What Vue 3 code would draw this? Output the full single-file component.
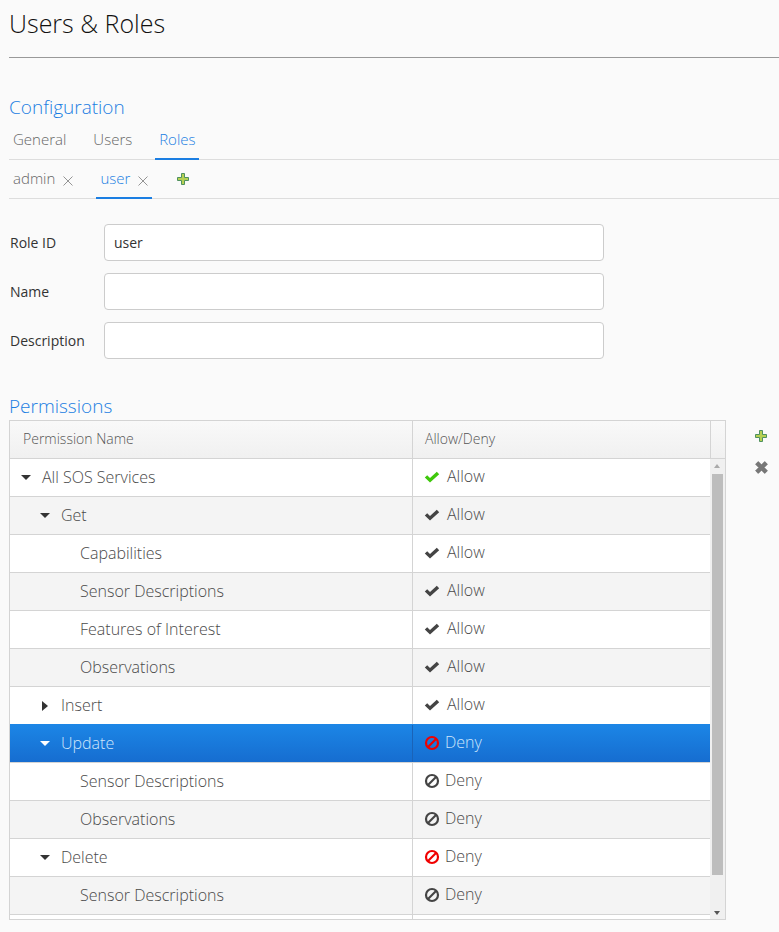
<script setup>
const rows = [
  { name: "All SOS Services", level: 1, arrow: "down", value: "Allow", color: "green" },
  { name: "Get", level: 2, arrow: "down", value: "Allow" },
  { name: "Capabilities", level: 3, value: "Allow" },
  { name: "Sensor Descriptions", level: 3, value: "Allow" },
  { name: "Features of Interest", level: 3, value: "Allow" },
  { name: "Observations", level: 3, value: "Allow" },
  { name: "Insert", level: 2, arrow: "right", value: "Allow" },
  { name: "Update", level: 2, arrow: "down", value: "Deny", color: "red", selected: true },
  { name: "Sensor Descriptions", level: 3, value: "Deny" },
  { name: "Observations", level: 3, value: "Deny" },
  { name: "Delete", level: 2, arrow: "down", value: "Deny", color: "red" },
  { name: "Sensor Descriptions", level: 3, value: "Deny" },
  { name: "", level: 3, value: "" },
];
</script>

<template>
  <div class="page">
    <h1 class="title">Users &amp; Roles</h1>
    <hr class="rule" />

    <h2 class="section config">Configuration</h2>
    <div class="tabs">
      <a class="tab">General</a>
      <a class="tab">Users</a>
      <a class="tab active">Roles</a>
    </div>
    <div class="subtabs">
      <a class="subtab">
        admin
        <svg class="close" viewBox="0 0 10 10"><path d="M.5 .5l9 9M9.5 .5l-9 9" /></svg>
      </a>
      <a class="subtab active">
        user
        <svg class="close" viewBox="0 0 10 10"><path d="M.5 .5l9 9M9.5 .5l-9 9" /></svg>
      </a>
      <svg class="add sub-add" viewBox="0 0 12 12">
        <path d="M4.5 .5h3v4h4v3h-4v4h-3v-4h-4v-3h4z" fill="#b6d052" stroke="#4f9160" />
      </svg>
    </div>

    <div class="form">
      <label class="field">
        <span class="field-label">Role ID</span>
        <input class="input" type="text" value="user" />
      </label>
      <label class="field">
        <span class="field-label">Name</span>
        <input class="input" type="text" />
      </label>
      <label class="field">
        <span class="field-label">Description</span>
        <input class="input" type="text" />
      </label>
    </div>

    <h2 class="section perms">Permissions</h2>
    <div class="table-wrap">
      <div class="table">
        <div class="head">
          <div class="col-name head-cell">Permission Name</div>
          <div class="col-value head-cell">Allow/Deny</div>
          <div class="head-spacer"></div>
        </div>
        <div class="body">
          <div class="rows">
            <div
              v-for="(row, i) in rows"
              :key="i"
              class="row"
              :class="{ odd: i % 2 === 1, selected: row.selected }"
            >
              <div class="col-name cell" :class="'level' + row.level">
                <span v-if="row.arrow" class="arrow" :class="row.arrow"></span>
                {{ row.name }}
              </div>
              <div class="col-value cell">
                <template v-if="row.value === 'Allow'">
                  <svg class="state" :class="row.color" viewBox="0 0 16 16">
                    <path d="M.8 8.6 3.2 6.2 6 9 12.8 2.8 15.2 5.2 6 13.6z" fill="currentColor" />
                  </svg>
                  <span class="value-text allow">{{ row.value }}</span>
                </template>
                <template v-else-if="row.value === 'Deny'">
                  <svg class="state" :class="row.color" viewBox="0 0 16 16">
                    <circle cx="8" cy="8" r="6" fill="none" stroke="currentColor" stroke-width="2.2" />
                    <path d="M4 12 12 4" stroke="currentColor" stroke-width="2.2" />
                  </svg>
                  <span class="value-text">{{ row.value }}</span>
                </template>
              </div>
            </div>
          </div>
          <div class="scrollbar">
            <span class="sb-up"></span>
            <div class="thumb"></div>
            <span class="sb-down"></span>
          </div>
        </div>
      </div>
      <div class="side-actions">
        <svg class="add" viewBox="0 0 12 12">
          <path d="M4.5 .5h3v4h4v3h-4v4h-3v-4h-4v-3h4z" fill="#b6d052" stroke="#4f9160" />
        </svg>
        <svg class="remove" viewBox="0 0 12 12">
          <path d="M3 .5 6 3.5 9 .5 11.5 3 8.5 6 11.5 9 9 11.5 6 8.5 3 11.5 .5 9 3.5 6 .5 3z" fill="#777" stroke="#666" stroke-width=".6" />
        </svg>
      </div>
    </div>
  </div>
</template>

<style>
html,
body {
  background: #fafafa;
}
</style>

<style scoped>
.page {
  height: 932px;
  overflow: hidden;
  box-sizing: border-box;
  padding-left: 9px;
  background: #fafafa;
  font-family: "Open Sans", sans-serif;
  font-weight: 300;
  color: #333;
}

.title {
  margin: 0;
  padding-top: 6px;
  height: 50px;
  box-sizing: border-box;
  font-size: 25px;
  line-height: 34px;
  font-weight: 300;
  color: #111;
}

.rule {
  margin: 7px 0 0;
  border: 0;
  border-top: 1px solid #999;
  height: 0;
}

.section {
  margin: 0;
  font-size: 19px;
  line-height: 26px;
  font-weight: 300;
  color: #1b7ee2;
}

.config {
  margin-top: 36px;
}

.tabs {
  display: flex;
  height: 40px;
  box-sizing: border-box;
  padding-top: 9px;
  border-bottom: 1px solid #ddd;
}

.tab {
  padding: 0 4px;
  margin-right: 19px;
  height: 31px;
  box-sizing: border-box;
  font-size: 15px;
  line-height: 21px;
  color: #666;
}

.tab.active {
  padding-right: 3px;
  color: #1b7ee2;
  border-bottom: 2px solid #1b7ee2;
}

.subtabs {
  display: flex;
  align-items: flex-start;
  height: 39px;
  box-sizing: border-box;
  padding-top: 8px;
  border-bottom: 1px solid #ddd;
}

.subtab {
  display: flex;
  align-items: flex-start;
  gap: 8px;
  padding: 0 4px;
  margin-right: 19px;
  height: 31px;
  box-sizing: border-box;
  font-size: 15px;
  line-height: 21px;
  color: #666;
}

.subtab.active {
  color: #1b7ee2;
  margin-right: 25px;
  border-bottom: 2px solid #1b7ee2;
}

.close {
  width: 10px;
  height: 10px;
  margin-top: 8px;
  fill: none;
  stroke: #888;
  stroke-width: 0.9;
}

.add {
  display: block;
  width: 12px;
  height: 12px;
}

.sub-add {
  margin-top: 5px;
}

.form {
  padding-top: 25px;
  display: flex;
  flex-direction: column;
  gap: 12px;
}

.field {
  display: flex;
  align-items: center;
}

.field-label {
  width: 95px;
  padding-left: 1px;
  box-sizing: border-box;
  font-size: 14px;
  font-weight: 400;
  color: #333;
}

.input {
  width: 500px;
  height: 37px;
  box-sizing: border-box;
  padding: 0 9px;
  border: 1px solid #ccc;
  border-radius: 4px;
  background: #fff;
  font-family: inherit;
  font-size: 14px;
  font-weight: 400;
  color: #333;
}

.perms {
  margin-top: 34px;
}

.table-wrap {
  display: flex;
  align-items: flex-start;
  margin-top: 1px;
}

.table {
  width: 717px;
  height: 500px;
  box-sizing: border-box;
  border: 1px solid #d4d4d4;
  background: #fff;
  overflow: hidden;
}

.head {
  display: flex;
  height: 38px;
  box-sizing: border-box;
  border-bottom: 1px solid #d4d4d4;
  background: linear-gradient(#f9f9f9, #f0f0f0);
}

.head-cell {
  font-size: 14px;
  line-height: 36px;
  font-weight: 300;
  color: #555;
  box-sizing: border-box;
}

.head .col-name {
  padding-left: 13px;
}

.head-spacer {
  flex: 1;
  border-left: 1px solid #d4d4d4;
}

.col-name {
  width: 402px;
  flex: none;
}

.col-value {
  width: 298px;
  flex: none;
  padding-left: 12px;
  border-left: 1px solid #d4d4d4;
  box-sizing: border-box;
}

.body {
  display: flex;
  height: 461px;
}

.rows {
  width: 700px;
  flex: none;
  overflow: hidden;
}

.row {
  display: flex;
  height: 38px;
  box-sizing: border-box;
  border-bottom: 1px solid #d4d4d4;
  background: #fff;
  font-size: 16px;
  line-height: 37px;
  color: #4a4a4a;
}

.row.odd {
  background: #f4f4f4;
}

.row.selected {
  margin-top: -1px;
  height: 39px;
  padding-top: 1px;
  background: linear-gradient(#1c86e6, #166dd0);
  color: #cfe6fb;
}

.row.selected .col-value {
  border-left-color: #1a63b8;
}

.cell {
  display: flex;
  align-items: center;
  white-space: nowrap;
  box-sizing: border-box;
}

.level1 {
  padding-left: 32px;
}

.level2 {
  padding-left: 51px;
}

.level3 {
  padding-left: 70px;
}

.arrow {
  width: 0;
  height: 0;
  margin-left: -21px;
  margin-right: 11px;
  border-style: solid;
  border-color: transparent;
}

.arrow.down {
  border-width: 5px 5px 0;
  border-top-color: #333;
}

.arrow.right {
  margin-left: -19px;
  margin-right: 13px;
  border-width: 5px 0 5px 6px;
  border-left-color: #333;
}

.selected .arrow.down {
  border-top-color: #fff;
}

.state {
  width: 16px;
  height: 16px;
  flex: none;
  margin-left: -1px;
  margin-bottom: 2px;
  color: #444;
}

.state.green {
  color: #3fc80c;
}

.state.red {
  color: #f00000;
}

.value-text {
  margin-left: 5px;
  padding-bottom: 2px;
}

.value-text.allow {
  margin-left: 7px;
}

.scrollbar {
  flex: 1;
  position: relative;
  background: #f0f0f0;
}

.thumb {
  position: absolute;
  top: 15px;
  left: 2px;
  width: 11px;
  height: 401px;
  background: #bdbdbd;
}

.sb-up,
.sb-down {
  position: absolute;
  left: 4px;
  width: 0;
  height: 0;
  border-style: solid;
  border-color: transparent;
}

.sb-up {
  top: 5px;
  border-width: 0 3.5px 4px;
  border-bottom-color: #aaa;
}

.sb-down {
  bottom: 5px;
  border-width: 4px 3.5px 0;
  border-top-color: #555;
}

.side-actions {
  display: flex;
  flex-direction: column;
  gap: 19px;
  margin-left: 29px;
  padding-top: 10px;
}

.remove {
  display: block;
  width: 13px;
  height: 13px;
}
</style>
